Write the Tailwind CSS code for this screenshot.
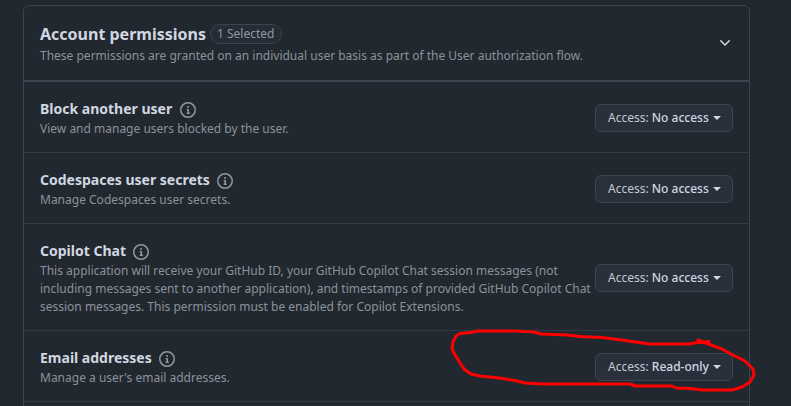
<!DOCTYPE html>
<html lang="en">
<head>
<meta charset="utf-8">
<title>Account permissions</title>
<script src="https://cdn.jsdelivr.net/npm/@tailwindcss/browser@4"></script>
</head>
<body class="relative h-[406px] overflow-hidden bg-[#22282f] pt-[5px] pl-[23px] font-['Noto_Sans',sans-serif] text-xs leading-[18px] text-[#8b929a]">
<svg class="hidden">
  <symbol id="info" viewBox="0 0 16 16"><path d="M0 8a8 8 0 1 1 16 0A8 8 0 0 1 0 8Zm8-6.5a6.5 6.5 0 1 0 0 13 6.5 6.5 0 0 0 0-13ZM6.5 7.75A.75.75 0 0 1 7.25 7h1a.75.75 0 0 1 .75.75v2.75h.25a.75.75 0 0 1 0 1.5h-2a.75.75 0 0 1 0-1.5h.25v-2h-.25a.75.75 0 0 1-.75-.75ZM8 6a1 1 0 1 1 0-2 1 1 0 0 1 0 2Z"/></symbol>
</svg>
<main class="h-[420px] w-[727px] rounded-md border border-[#3d444f]">
  <header class="flex h-[75px] items-center justify-between border-b border-[#3d444f] pr-4 pl-4">
    <div>
      <div class="mb-px flex h-6 items-center gap-1">
        <h1 class="text-base leading-6 font-bold text-[#d1d7e0]">Account permissions</h1>
        <span class="flex h-5 items-center rounded-full border border-[#3d444f] bg-[#262c36] pr-[7px] pl-1.5 text-[#9198a1]">1 Selected</span>
      </div>
      <p>These permissions are granted on an individual user basis as part of the User authorization flow.</p>
    </div>
    <svg class="h-4 w-4 fill-[#d1d7e0]" viewBox="0 0 16 16"><path d="M12.78 5.22a.749.749 0 0 1 0 1.06l-4.25 4.25a.749.749 0 0 1-1.06 0L3.22 6.28a.749.749 0 1 1 1.06-1.06L8 8.939l3.72-3.719a.749.749 0 0 1 1.06 0Z"/></svg>
  </header>
  <section class="flex h-[71px] items-center justify-between border-t border-[#3d444f] pt-0.5 pr-4 pl-4">
    <div><h2 class="mb-px flex h-5 items-center gap-[7.4px] text-sm leading-5 font-bold text-[#d1d7e0]">Block another user <svg class="mt-0.5 h-4 w-4 fill-[#9198a1]"><use href="#info"/></svg></h2><p>View and manage users blocked by the user.</p></div>
    <button class="flex h-7 w-[138px] shrink-0 items-center rounded-md border border-[#3d444f] bg-[#2a303b] pl-3 font-medium whitespace-pre text-[#d1d7e0]"><span class="font-normal text-[#c3c9d1]">Access: </span>No access<i class="ml-1 border-x-4 border-t-4 border-x-transparent border-t-[#d1d7e0]"></i></button>
  </section>
  <section class="flex h-[71px] items-center justify-between border-t border-[#343a43] pt-0.5 pr-4 pl-4">
    <div><h2 class="mb-px flex h-5 items-center gap-[7.4px] text-sm leading-5 font-bold text-[#d1d7e0]">Codespaces user secrets <svg class="mt-0.5 h-4 w-4 fill-[#9198a1]"><use href="#info"/></svg></h2><p>Manage Codespaces user secrets.</p></div>
    <button class="flex h-7 w-[138px] shrink-0 items-center rounded-md border border-[#3d444f] bg-[#2a303b] pl-3 font-medium whitespace-pre text-[#d1d7e0]"><span class="font-normal text-[#c3c9d1]">Access: </span>No access<i class="ml-1 border-x-4 border-t-4 border-x-transparent border-t-[#d1d7e0]"></i></button>
  </section>
  <section class="flex h-[107px] items-center justify-between border-t border-[#343a43] pt-0.5 pr-4 pl-4">
    <div><h2 class="mb-px flex h-5 items-center gap-[7.4px] text-sm leading-5 font-bold text-[#d1d7e0]">Copilot Chat <svg class="mt-0.5 h-4 w-4 fill-[#9198a1]"><use href="#info"/></svg></h2><p class="whitespace-nowrap">This application will receive your GitHub ID, your GitHub Copilot Chat session messages (not<br>including messages sent to another application), and timestamps of provided GitHub Copilot Chat<br>session messages. This permission must be enabled for Copilot Extensions.</p></div>
    <button class="flex h-7 w-[138px] shrink-0 items-center rounded-md border border-[#3d444f] bg-[#2a303b] pl-3 font-medium whitespace-pre text-[#d1d7e0]"><span class="font-normal text-[#c3c9d1]">Access: </span>No access<i class="ml-1 border-x-4 border-t-4 border-x-transparent border-t-[#d1d7e0]"></i></button>
  </section>
  <section class="flex h-[71px] items-center justify-between border-t border-[#343a43] pt-0.5 pr-4 pl-4">
    <div><h2 class="mb-px flex h-5 items-center gap-[7.4px] text-sm leading-5 font-bold text-[#d1d7e0]">Email addresses <svg class="mt-0.5 h-4 w-4 fill-[#9198a1]"><use href="#info"/></svg></h2><p>Manage a user's email addresses.</p></div>
    <button class="flex h-7 w-[138px] shrink-0 items-center rounded-md border border-[#3d444f] bg-[#2a303b] pl-3 font-medium whitespace-pre text-[#d1d7e0]"><span class="font-normal text-[#c3c9d1]">Access: </span>Read-only<i class="ml-1 border-x-4 border-t-4 border-x-transparent border-t-[#d1d7e0]"></i></button>
  </section>
  <div class="border-t border-[#343a43]"></div>
</main>
<!-- Hand-drawn highlight around the email permission -->
<svg class="pointer-events-none absolute top-0 left-0 h-[406px] w-[791px]" viewBox="0 0 791 406" fill="none" stroke="#ff0000" stroke-width="3" stroke-linecap="round" stroke-linejoin="round"><path d="M709 341.500L697 342.500L689 344L649 344L622 340L602 337.500L580 336.500L567 335L541 334L534 332L516 331H477L471 332.500L460 333.500L456 336L453 342L452 349L455 355L464 369L471 374L480 376L499 378L515 380.500L525 383L543 384H630L635 386H672L676 388L690 388.500L703 390H732L742 387L750 382L754 375L753 369L745 361L733 355L722 349L711 345L698 340"/></svg>
</body>
</html>
